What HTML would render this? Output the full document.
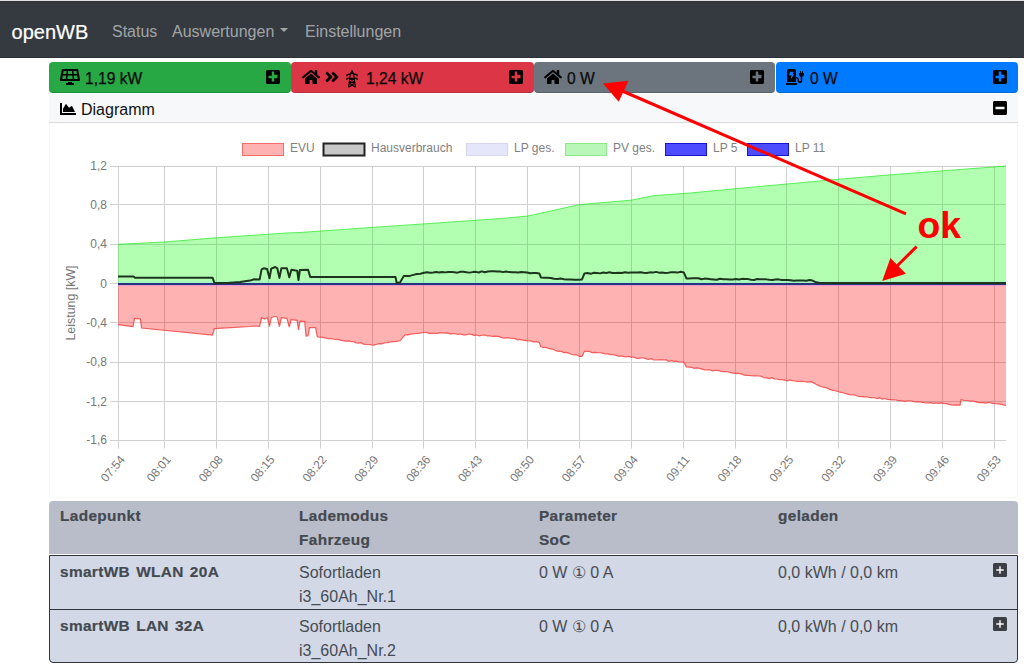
<!DOCTYPE html>
<html><head><meta charset="utf-8"><style>
*{box-sizing:border-box}
html,body{margin:0;padding:0;width:1024px;height:670px;overflow:hidden;background:#fff;font-family:"Liberation Sans",sans-serif;position:relative}
.abs{position:absolute}
.nav{left:0;top:0;width:1024px;height:58px;background:#343a40;border-top:1px solid #dde0e4;border-bottom:1px solid #2c3136;box-shadow:inset 0 1px 0 #2e3237}
.nav .t{position:absolute;white-space:nowrap}
.card{position:absolute;top:62px;height:31px;border-radius:4px;border-bottom:1px solid rgba(0,0,0,.15);color:#0a0a0a;font-size:15.6px}
.card .lbl{position:absolute;top:6.5px;white-space:nowrap;line-height:19px;-webkit-text-stroke:.25px #0a0a0a}
.card .pl{position:absolute;top:7px;right:11px;color:#000;line-height:0}
.ico{position:absolute;line-height:0;color:#000}
</style></head><body>
<div class="abs nav">
  <div class="t" style="left:11.6px;top:18.8px;font-size:20px;color:#fff;line-height:24px;-webkit-text-stroke:.2px #fff">openWB</div>
  <div class="t" style="left:112px;top:21px;font-size:16px;color:rgba(255,255,255,.55);line-height:19px">Status</div>
  <div class="t" style="left:172px;top:21px;font-size:16px;color:rgba(255,255,255,.55);line-height:19px">Auswertungen</div>
  <div class="t" style="left:280px;top:27px;width:0;height:0;border-left:4px solid transparent;border-right:4px solid transparent;border-top:4.5px solid rgba(255,255,255,.55)"></div>
  <div class="t" style="left:305px;top:21px;font-size:16px;color:rgba(255,255,255,.55);line-height:19px">Einstellungen</div>
</div>
<div class="card" style="left:49px;width:241.5px;background:#28a745">
  <div class="ico" style="left:10.8px;top:7.4px"><svg viewBox="0 0 640 512" width="20" height="16"><path fill="currentColor" d="M431.98 448.01l-47.97.05V416h-128v32.21l-47.98.05c-8.82.01-15.97 7.16-15.98 15.99l-.05 31.73c-.01 8.85 7.17 16.03 16.02 16.02l223.96-.26c8.82-.01 15.97-7.16 15.98-15.98l.04-31.73c.01-8.85-7.17-16.03-16.02-16.02zM585.2 26.74C582.58 11.31 568.99 0 553.06 0H86.93C71 0 57.41 11.31 54.79 26.74-3.32 369.16.04 348.08.03 352c-.03 17.32 14.29 32 32.6 32h574.74c18.23 0 32.51-14.56 32.59-31.79.02-4.08 3.35 16.46-54.76-325.47zM259.83 64h120.33l9.77 96H250.06l9.77-96zm-75.17 256H71.09L90.1 208h105.97l-11.41 112zm16.29-160H98.24l16.29-96h96.19l-9.77 96zm32.82 160l11.4-112h149.65l11.4 112H233.77zm195.5-256h96.19l16.29 96H439.04l-9.77-96zm26.06 256l-11.4-112H549.9l19.01 112H455.33z"/></svg></div>
  <div class="lbl" style="left:36px">1,19 kW</div>
  <div class="pl"><svg viewBox="0 0 448 512" width="14" height="16"><path fill="currentColor" d="M400 32H48C21.5 32 0 53.5 0 80v352c0 26.5 21.5 48 48 48h352c26.5 0 48-21.5 48-48V80c0-26.5-21.5-48-48-48zm-32 252c0 6.6-5.4 12-12 12h-92v92c0 6.6-5.4 12-12 12h-56c-6.6 0-12-5.4-12-12v-92H92c-6.6 0-12-5.4-12-12v-56c0-6.6 5.4-12 12-12h92V92c0-6.6 5.4-12 12-12h56c6.6 0 12 5.4 12 12v92h92c6.6 0 12 5.4 12 12v56z"/></svg></div>
</div>
<div class="card" style="left:291px;width:242.5px;background:#dc3545">
  <div class="ico" style="left:11px;top:7px"><svg viewBox="0 0 576 512" width="18" height="16"><path fill="currentColor" d="M280.37 148.26L96 300.11V464a16 16 0 0 0 16 16l112.06-.29a16 16 0 0 0 15.92-16V368a16 16 0 0 1 16-16h64a16 16 0 0 1 16 16v95.64a16 16 0 0 0 16 16.05L464 480a16 16 0 0 0 16-16V300L295.67 148.26a12.19 12.19 0 0 0-15.3 0zM571.6 251.47L488 182.56V44.05a12 12 0 0 0-12-12h-56a12 12 0 0 0-12 12v72.61L318.47 43a48 48 0 0 0-61 0L4.34 251.47a12 12 0 0 0-1.6 16.9l25.5 31A12 12 0 0 0 45.15 301l235.22-193.74a12.19 12.19 0 0 1 15.3 0L530.9 301a12 12 0 0 0 16.9-1.6l25.5-31a12 12 0 0 0-1.7-16.93z"/></svg></div>
  <div class="ico" style="left:325px;top:7px;left:34px"><svg viewBox="0 0 448 512" width="14" height="16"><path fill="currentColor" stroke="currentColor" stroke-width="10" stroke-linejoin="round" d="M224.3 273l-136 136c-9.4 9.4-24.6 9.4-33.9 0l-22.6-22.6c-9.4-9.4-9.4-24.6 0-33.9l96.4-96.4-96.4-96.4c-9.4-9.4-9.4-24.6 0-33.9L54.3 103c9.4-9.4 24.6-9.4 33.9 0l136 136c9.5 9.4 9.5 24.6.1 34zm192-34l-136-136c-9.4-9.4-24.6-9.4-33.9 0l-22.6 22.6c-9.4 9.4-9.4 24.6 0 33.9l96.4 96.4-96.4 96.4c-9.4 9.4-9.4 24.6 0 33.9l22.6 22.6c9.4 9.4 24.6 9.4 33.9 0l136-136c9.4-9.2 9.4-24.4 0-33.8z"/></svg></div>
  <div class="ico" style="left:54.8px;top:8px"><svg viewBox="0 0 12 18" width="12" height="18"><g fill="none" stroke="currentColor" stroke-width="1.1" stroke-linejoin="round"><path d="M6 0.6 L4.3 4 L2.6 17.4 M6 0.6 L7.7 4 L9.4 17.4 M0.9 6.3 L0.9 4.9 L6 3.4 L11.1 4.9 L11.1 6.3 M0.9 10 L0.9 8.2 L11.1 8.2 L11.1 10 M4 8.2 L8.4 12.5 M8 8.2 L3.6 12.5 M3.6 12.5 L8.4 12.5 M3.3 13 L8.9 17 M8.7 13 L3.1 17"/></g></svg></div>
  <div class="lbl" style="left:75px">1,24 kW</div>
  <div class="pl"><svg viewBox="0 0 448 512" width="14" height="16"><path fill="currentColor" d="M400 32H48C21.5 32 0 53.5 0 80v352c0 26.5 21.5 48 48 48h352c26.5 0 48-21.5 48-48V80c0-26.5-21.5-48-48-48zm-32 252c0 6.6-5.4 12-12 12h-92v92c0 6.6-5.4 12-12 12h-56c-6.6 0-12-5.4-12-12v-92H92c-6.6 0-12-5.4-12-12v-56c0-6.6 5.4-12 12-12h92V92c0-6.6 5.4-12 12-12h56c6.6 0 12 5.4 12 12v92h92c6.6 0 12 5.4 12 12v56z"/></svg></div>
</div>
<div class="card" style="left:534px;width:241px;background:#6c757d">
  <div class="ico" style="left:10px;top:7px"><svg viewBox="0 0 576 512" width="18" height="16"><path fill="currentColor" d="M280.37 148.26L96 300.11V464a16 16 0 0 0 16 16l112.06-.29a16 16 0 0 0 15.92-16V368a16 16 0 0 1 16-16h64a16 16 0 0 1 16 16v95.64a16 16 0 0 0 16 16.05L464 480a16 16 0 0 0 16-16V300L295.67 148.26a12.19 12.19 0 0 0-15.3 0zM571.6 251.47L488 182.56V44.05a12 12 0 0 0-12-12h-56a12 12 0 0 0-12 12v72.61L318.47 43a48 48 0 0 0-61 0L4.34 251.47a12 12 0 0 0-1.6 16.9l25.5 31A12 12 0 0 0 45.15 301l235.22-193.74a12.19 12.19 0 0 1 15.3 0L530.9 301a12 12 0 0 0 16.9-1.6l25.5-31a12 12 0 0 0-1.7-16.93z"/></svg></div>
  <div class="lbl" style="left:33px">0 W</div>
  <div class="pl"><svg viewBox="0 0 448 512" width="14" height="16"><path fill="currentColor" d="M400 32H48C21.5 32 0 53.5 0 80v352c0 26.5 21.5 48 48 48h352c26.5 0 48-21.5 48-48V80c0-26.5-21.5-48-48-48zm-32 252c0 6.6-5.4 12-12 12h-92v92c0 6.6-5.4 12-12 12h-56c-6.6 0-12-5.4-12-12v-92H92c-6.6 0-12-5.4-12-12v-56c0-6.6 5.4-12 12-12h92V92c0-6.6 5.4-12 12-12h56c6.6 0 12 5.4 12 12v92h92c6.6 0 12 5.4 12 12v56z"/></svg></div>
</div>
<div class="card" style="left:776px;width:242px;background:#007bff">
  <div class="ico" style="left:10px;top:7px"><svg viewBox="0 0 576 512" width="18" height="16"><path fill="currentColor" d="M336 448H16c-8.84 0-16 7.16-16 16v32c0 8.84 7.16 16 16 16h320c8.84 0 16-7.16 16-16v-32c0-8.84-7.16-16-16-16zm208-320V80c0-8.84-7.16-16-16-16s-16 7.160-16 16v48h-32V80c0-8.84-7.16-16-16-16s-16 7.16-16 16v48h-16c-8.84 0-16 7.16-16 16v32c0 35.76 23.620 65.69 56 75.930v118.49c0 13.95-9.5 26.92-23.26 29.19C431.22 402.5 416 388.99 416 372v-28c0-48.6-39.4-88-88-88h-8V64c0-35.35-28.65-64-64-64H96C60.65 0 32 28.65 32 64v352h288V304h8c22.09 0 40 17.91 40 40v24.61c0 39.67 28.92 75.16 68.41 79.01C481.71 452.05 520 416.41 520 372V251.93c32.38-10.24 56-40.17 56-75.930v-32c0-8.84-7.16-16-16-16h-16zm-283.91 47.68l-75.09 112c-3.05 4.78-8.25 7.32-13.5 7.32-10.98 0-18.78-10.61-15.52-21.06L177.8 208H112c-8.41 0-14.6-8.06-12.9-16.13l22.63-96C123 90.2 128.27 86 134.3 86H224c10.71 0 18.43 10.23 15.34 20.57L216 176h32c12.42 0 20.08 13.42 13.66 23.74z"/></svg></div>
  <div class="lbl" style="left:34px">0 W</div>
  <div class="pl"><svg viewBox="0 0 448 512" width="14" height="16"><path fill="currentColor" d="M400 32H48C21.5 32 0 53.5 0 80v352c0 26.5 21.5 48 48 48h352c26.5 0 48-21.5 48-48V80c0-26.5-21.5-48-48-48zm-32 252c0 6.6-5.4 12-12 12h-92v92c0 6.6-5.4 12-12 12h-56c-6.6 0-12-5.4-12-12v-92H92c-6.6 0-12-5.4-12-12v-56c0-6.6 5.4-12 12-12h92V92c0-6.6 5.4-12 12-12h56c6.6 0 12 5.4 12 12v92h92c6.6 0 12 5.4 12 12v56z"/></svg></div>
</div>
<div class="abs" style="left:49px;top:94px;width:969px;height:404px;border:1px solid rgba(0,0,0,.035);border-radius:4px;background:#fff"></div>
<div class="abs" style="left:49px;top:94px;width:969px;height:29px;background:#f7f8fa;border-bottom:1px solid #dcdcdc;border-radius:4px 4px 0 0"></div>
<div class="ico" style="left:60px;top:101px"><svg viewBox="0 0 512 512" width="16" height="16"><path fill="currentColor" d="M500 384c6.6 0 12 5.4 12 12v40c0 6.6-5.4 12-12 12H12c-6.6 0-12-5.4-12-12V76c0-6.6 5.4-12 12-12h40c6.6 0 12 5.4 12 12v308h436zM372.7 159.5L288 216l-85.3-113.7c-5.1-6.8-15.5-6.3-19.9 1L96 248v104h384l-89.9-187.8c-3.2-6.5-11.4-8.7-17.4-4.7z"/></svg></div>
<div class="abs" style="left:81px;top:100px;font-size:16px;color:#111;line-height:19px">Diagramm</div>
<div class="ico" style="left:993px;top:100px"><svg viewBox="0 0 448 512" width="14" height="16"><path fill="currentColor" d="M400 32H48C21.5 32 0 53.5 0 80v352c0 26.5 21.5 48 48 48h352c26.5 0 48-21.5 48-48V80c0-26.5-21.5-48-48-48zM92 296c-6.6 0-12-5.4-12-12v-56c0-6.6 5.4-12 12-12h264c6.6 0 12 5.4 12 12v56c0 6.6-5.4 12-12 12H92z"/></svg></div>
<svg width="1024" height="670" style="position:absolute;left:0;top:0">
<line x1="110" y1="166.5" x2="1006" y2="166.5" stroke="#d0d0d0" stroke-width="1"/>
<line x1="110" y1="204.5" x2="1006" y2="204.5" stroke="#d0d0d0" stroke-width="1"/>
<line x1="110" y1="244.5" x2="1006" y2="244.5" stroke="#d0d0d0" stroke-width="1"/>
<line x1="110" y1="283.5" x2="1006" y2="283.5" stroke="#d0d0d0" stroke-width="1"/>
<line x1="110" y1="322.5" x2="1006" y2="322.5" stroke="#d0d0d0" stroke-width="1"/>
<line x1="110" y1="362.5" x2="1006" y2="362.5" stroke="#d0d0d0" stroke-width="1"/>
<line x1="110" y1="401.5" x2="1006" y2="401.5" stroke="#d0d0d0" stroke-width="1"/>
<line x1="110" y1="440.5" x2="1006" y2="440.5" stroke="#d0d0d0" stroke-width="1"/>
<line x1="118.5" y1="166" x2="118.5" y2="448.5" stroke="#d0d0d0" stroke-width="1"/>
<line x1="164.5" y1="166" x2="164.5" y2="448.5" stroke="#d0d0d0" stroke-width="1"/>
<line x1="216.5" y1="166" x2="216.5" y2="448.5" stroke="#d0d0d0" stroke-width="1"/>
<line x1="268.5" y1="166" x2="268.5" y2="448.5" stroke="#d0d0d0" stroke-width="1"/>
<line x1="320.5" y1="166" x2="320.5" y2="448.5" stroke="#d0d0d0" stroke-width="1"/>
<line x1="372.5" y1="166" x2="372.5" y2="448.5" stroke="#d0d0d0" stroke-width="1"/>
<line x1="423.5" y1="166" x2="423.5" y2="448.5" stroke="#d0d0d0" stroke-width="1"/>
<line x1="475.5" y1="166" x2="475.5" y2="448.5" stroke="#d0d0d0" stroke-width="1"/>
<line x1="527.5" y1="166" x2="527.5" y2="448.5" stroke="#d0d0d0" stroke-width="1"/>
<line x1="579.5" y1="166" x2="579.5" y2="448.5" stroke="#d0d0d0" stroke-width="1"/>
<line x1="631.5" y1="166" x2="631.5" y2="448.5" stroke="#d0d0d0" stroke-width="1"/>
<line x1="683.5" y1="166" x2="683.5" y2="448.5" stroke="#d0d0d0" stroke-width="1"/>
<line x1="735.5" y1="166" x2="735.5" y2="448.5" stroke="#d0d0d0" stroke-width="1"/>
<line x1="786.5" y1="166" x2="786.5" y2="448.5" stroke="#d0d0d0" stroke-width="1"/>
<line x1="838.5" y1="166" x2="838.5" y2="448.5" stroke="#d0d0d0" stroke-width="1"/>
<line x1="890.5" y1="166" x2="890.5" y2="448.5" stroke="#d0d0d0" stroke-width="1"/>
<line x1="942.5" y1="166" x2="942.5" y2="448.5" stroke="#d0d0d0" stroke-width="1"/>
<line x1="994.5" y1="166" x2="994.5" y2="448.5" stroke="#d0d0d0" stroke-width="1"/>
<text x="107" y="170.3" text-anchor="end" font-family="Liberation Sans" font-size="12" fill="#777">1,2</text>
<text x="107" y="208.8" text-anchor="end" font-family="Liberation Sans" font-size="12" fill="#777">0,8</text>
<text x="107" y="248.3" text-anchor="end" font-family="Liberation Sans" font-size="12" fill="#777">0,4</text>
<text x="107" y="287.8" text-anchor="end" font-family="Liberation Sans" font-size="12" fill="#777">0</text>
<text x="107" y="326.8" text-anchor="end" font-family="Liberation Sans" font-size="12" fill="#777">-0,4</text>
<text x="107" y="366.3" text-anchor="end" font-family="Liberation Sans" font-size="12" fill="#777">-0,8</text>
<text x="107" y="405.8" text-anchor="end" font-family="Liberation Sans" font-size="12" fill="#777">-1,2</text>
<text x="107" y="444.3" text-anchor="end" font-family="Liberation Sans" font-size="12" fill="#777">-1,6</text>
<text transform="translate(75.3,303) rotate(-90)" text-anchor="middle" font-family="Liberation Sans" font-size="12.4" fill="#777">Leistung [kW]</text>
<text transform="translate(123.2,457.8) rotate(-50)" text-anchor="end" dominant-baseline="middle" font-family="Liberation Sans" font-size="12" fill="#777">07:54</text>
<text transform="translate(169.2,457.8) rotate(-50)" text-anchor="end" dominant-baseline="middle" font-family="Liberation Sans" font-size="12" fill="#777">08:01</text>
<text transform="translate(221.075,457.8) rotate(-50)" text-anchor="end" dominant-baseline="middle" font-family="Liberation Sans" font-size="12" fill="#777">08:08</text>
<text transform="translate(272.95,457.8) rotate(-50)" text-anchor="end" dominant-baseline="middle" font-family="Liberation Sans" font-size="12" fill="#777">08:15</text>
<text transform="translate(324.825,457.8) rotate(-50)" text-anchor="end" dominant-baseline="middle" font-family="Liberation Sans" font-size="12" fill="#777">08:22</text>
<text transform="translate(376.7,457.8) rotate(-50)" text-anchor="end" dominant-baseline="middle" font-family="Liberation Sans" font-size="12" fill="#777">08:29</text>
<text transform="translate(428.575,457.8) rotate(-50)" text-anchor="end" dominant-baseline="middle" font-family="Liberation Sans" font-size="12" fill="#777">08:36</text>
<text transform="translate(480.45,457.8) rotate(-50)" text-anchor="end" dominant-baseline="middle" font-family="Liberation Sans" font-size="12" fill="#777">08:43</text>
<text transform="translate(532.325,457.8) rotate(-50)" text-anchor="end" dominant-baseline="middle" font-family="Liberation Sans" font-size="12" fill="#777">08:50</text>
<text transform="translate(584.2,457.8) rotate(-50)" text-anchor="end" dominant-baseline="middle" font-family="Liberation Sans" font-size="12" fill="#777">08:57</text>
<text transform="translate(636.075,457.8) rotate(-50)" text-anchor="end" dominant-baseline="middle" font-family="Liberation Sans" font-size="12" fill="#777">09:04</text>
<text transform="translate(687.95,457.8) rotate(-50)" text-anchor="end" dominant-baseline="middle" font-family="Liberation Sans" font-size="12" fill="#777">09:11</text>
<text transform="translate(739.825,457.8) rotate(-50)" text-anchor="end" dominant-baseline="middle" font-family="Liberation Sans" font-size="12" fill="#777">09:18</text>
<text transform="translate(791.7,457.8) rotate(-50)" text-anchor="end" dominant-baseline="middle" font-family="Liberation Sans" font-size="12" fill="#777">09:25</text>
<text transform="translate(843.575,457.8) rotate(-50)" text-anchor="end" dominant-baseline="middle" font-family="Liberation Sans" font-size="12" fill="#777">09:32</text>
<text transform="translate(895.45,457.8) rotate(-50)" text-anchor="end" dominant-baseline="middle" font-family="Liberation Sans" font-size="12" fill="#777">09:39</text>
<text transform="translate(947.325,457.8) rotate(-50)" text-anchor="end" dominant-baseline="middle" font-family="Liberation Sans" font-size="12" fill="#777">09:46</text>
<text transform="translate(999.2,457.8) rotate(-50)" text-anchor="end" dominant-baseline="middle" font-family="Liberation Sans" font-size="12" fill="#777">09:53</text>
<polygon points="118,244.3 164,242 216,237.8 288,232.9 300,232.5 372,227.4 424,223.9 500,218.6 528,216 555,210 580,204.5 631,200.2 654,195.6 690,193 755,186.9 837,179.4 888,175 1006,166 1006,283.4 118,283.4" fill="rgba(0,255,0,0.3)"/>
<polygon points="118.0,324.70 133.0,326.70 134.5,318.30 140.3,318.90 141.6,328.00 212.5,335.00 214.5,328.60 250.0,326.50 254.1,326.00 259.6,326.30 261.6,317.60 265.0,319.00 267.4,317.60 269.5,326.50 271.2,317.60 275.3,316.30 277.3,317.30 279.4,326.50 281.4,317.60 286.9,318.30 289.3,327.20 291.0,319.70 297.2,320.40 298.5,330.00 299.9,321.10 304.7,321.40 306.0,336.10 308.1,335.80 309.5,327.60 315.6,327.60 317.3,336.80 320.0,337.10 322.6,337.42 325.1,337.93 327.7,338.75 330.3,338.58 332.9,339.01 335.4,339.49 338.0,339.39 340.6,340.16 343.1,340.68 345.7,341.26 348.3,340.80 350.9,341.44 353.4,341.56 356.0,342.80 358.6,343.05 361.1,342.65 363.7,344.15 366.3,344.51 368.9,344.52 371.4,344.86 374.0,345.10 376.6,344.26 379.2,343.66 381.8,343.84 384.4,342.85 387.0,342.58 389.6,342.21 392.2,341.53 394.8,341.62 397.4,341.16 400.0,340.80 405.0,334.80 407.7,334.88 410.4,334.17 413.1,333.98 415.9,333.49 418.6,333.35 421.3,332.78 424.0,332.50 426.6,332.34 429.2,333.32 431.8,333.42 434.4,333.34 437.0,333.29 439.7,332.93 442.3,332.94 444.9,333.12 447.5,332.97 450.1,333.91 452.7,333.70 455.4,333.73 458.0,334.42 460.7,334.01 463.4,334.85 466.0,334.87 468.7,334.00 471.4,334.40 474.0,335.39 476.7,335.01 479.3,335.78 482.0,335.23 484.7,334.99 487.3,335.81 490.0,335.80 492.5,336.47 495.0,336.19 497.6,336.30 500.1,336.93 502.6,338.02 505.1,338.11 507.6,337.67 510.2,338.16 512.7,338.32 515.2,338.61 517.7,339.82 520.2,339.41 522.8,340.20 525.3,340.40 527.8,340.80 530.7,340.83 533.5,341.88 536.4,341.56 539.3,342.40 540.9,346.70 543.5,347.48 546.0,347.46 548.6,348.44 551.2,348.81 553.7,349.49 556.3,350.94 558.9,351.35 561.5,351.36 564.0,352.67 566.6,352.48 569.2,353.31 571.7,354.48 574.3,354.83 576.9,354.80 579.4,356.47 582.0,356.50 584.5,351.30 587.1,351.28 589.7,351.67 592.3,352.61 594.9,352.41 597.5,352.69 600.1,352.75 602.7,353.10 605.3,354.02 607.9,353.94 610.4,354.70 613.0,354.75 615.6,355.18 618.2,356.11 620.8,355.87 623.4,356.31 626.0,356.98 628.6,356.49 631.2,357.20 633.7,357.02 636.2,358.16 638.7,358.28 641.2,357.83 643.7,357.99 646.2,358.89 648.7,359.36 651.2,358.70 653.7,359.84 656.2,359.99 658.8,359.89 661.3,359.91 663.8,359.76 666.3,359.91 668.8,361.26 671.3,360.62 673.8,361.41 676.3,361.11 678.8,362.02 681.3,361.98 683.8,362.10 686.4,367.00 689.0,367.09 691.6,367.28 694.2,368.27 696.8,367.83 699.5,368.36 702.1,369.09 704.7,369.78 707.3,369.83 709.9,369.77 712.5,370.87 715.1,370.35 717.7,370.46 720.3,371.10 722.9,371.65 725.6,371.53 728.2,372.00 730.8,372.57 733.4,373.15 736.0,373.40 738.6,373.31 741.1,373.94 743.7,374.93 746.2,375.39 748.8,375.35 751.3,375.75 753.9,375.97 756.4,375.79 759.0,376.02 761.5,376.35 764.1,377.77 766.6,377.87 769.2,378.54 771.7,377.76 774.3,378.85 776.8,379.02 779.4,379.67 781.9,379.53 784.5,380.10 787.1,380.86 789.7,379.91 792.2,380.64 794.8,381.02 797.4,381.38 800.0,381.34 802.6,381.46 805.1,381.73 807.7,382.04 810.3,381.70 813.2,382.66 816.0,384.20 818.9,385.60 821.7,386.71 824.6,387.40 827.3,388.12 829.9,389.39 832.6,390.30 835.2,390.77 837.9,391.50 840.6,392.35 843.3,392.76 845.9,393.70 848.6,394.43 851.3,395.00 853.9,394.81 856.5,395.79 859.1,396.53 861.7,396.71 864.3,396.84 866.9,396.75 869.5,397.48 872.0,397.60 874.6,397.75 877.2,398.54 879.8,397.95 882.4,399.06 885.0,398.51 887.6,399.51 890.2,399.70 892.7,399.88 895.2,399.79 897.8,400.56 900.3,400.53 902.8,400.88 905.3,401.45 907.9,400.86 910.4,400.78 912.9,401.33 915.4,401.99 918.0,401.63 920.5,401.80 923.0,402.40 925.6,403.01 928.1,402.84 930.7,402.71 933.3,403.37 935.9,402.82 938.5,403.35 941.0,402.91 943.6,403.40 946.3,403.63 949.1,404.40 951.8,404.85 954.5,405.12 957.3,404.84 960.0,405.30 961.0,399.70 964.1,400.30 967.1,400.48 970.2,401.20 972.7,401.01 975.2,401.68 977.7,402.34 980.2,402.60 982.8,402.68 985.3,403.21 987.8,402.64 990.3,402.76 992.8,403.40 995.4,403.72 998.1,403.89 1000.7,404.20 1003.4,404.82 1006.0,405.30 1006,283.4 118,283.4" fill="rgba(255,0,0,0.3)"/>
<polyline points="118,244.3 164,242 216,237.8 288,232.9 300,232.5 372,227.4 424,223.9 500,218.6 528,216 555,210 580,204.5 631,200.2 654,195.6 690,193 755,186.9 837,179.4 888,175 1006,166" fill="none" stroke="rgba(0,230,0,0.6)" stroke-width="1"/>
<polyline points="118.0,324.70 133.0,326.70 134.5,318.30 140.3,318.90 141.6,328.00 212.5,335.00 214.5,328.60 250.0,326.50 254.1,326.00 259.6,326.30 261.6,317.60 265.0,319.00 267.4,317.60 269.5,326.50 271.2,317.60 275.3,316.30 277.3,317.30 279.4,326.50 281.4,317.60 286.9,318.30 289.3,327.20 291.0,319.70 297.2,320.40 298.5,330.00 299.9,321.10 304.7,321.40 306.0,336.10 308.1,335.80 309.5,327.60 315.6,327.60 317.3,336.80 320.0,337.10 322.6,337.42 325.1,337.93 327.7,338.75 330.3,338.58 332.9,339.01 335.4,339.49 338.0,339.39 340.6,340.16 343.1,340.68 345.7,341.26 348.3,340.80 350.9,341.44 353.4,341.56 356.0,342.80 358.6,343.05 361.1,342.65 363.7,344.15 366.3,344.51 368.9,344.52 371.4,344.86 374.0,345.10 376.6,344.26 379.2,343.66 381.8,343.84 384.4,342.85 387.0,342.58 389.6,342.21 392.2,341.53 394.8,341.62 397.4,341.16 400.0,340.80 405.0,334.80 407.7,334.88 410.4,334.17 413.1,333.98 415.9,333.49 418.6,333.35 421.3,332.78 424.0,332.50 426.6,332.34 429.2,333.32 431.8,333.42 434.4,333.34 437.0,333.29 439.7,332.93 442.3,332.94 444.9,333.12 447.5,332.97 450.1,333.91 452.7,333.70 455.4,333.73 458.0,334.42 460.7,334.01 463.4,334.85 466.0,334.87 468.7,334.00 471.4,334.40 474.0,335.39 476.7,335.01 479.3,335.78 482.0,335.23 484.7,334.99 487.3,335.81 490.0,335.80 492.5,336.47 495.0,336.19 497.6,336.30 500.1,336.93 502.6,338.02 505.1,338.11 507.6,337.67 510.2,338.16 512.7,338.32 515.2,338.61 517.7,339.82 520.2,339.41 522.8,340.20 525.3,340.40 527.8,340.80 530.7,340.83 533.5,341.88 536.4,341.56 539.3,342.40 540.9,346.70 543.5,347.48 546.0,347.46 548.6,348.44 551.2,348.81 553.7,349.49 556.3,350.94 558.9,351.35 561.5,351.36 564.0,352.67 566.6,352.48 569.2,353.31 571.7,354.48 574.3,354.83 576.9,354.80 579.4,356.47 582.0,356.50 584.5,351.30 587.1,351.28 589.7,351.67 592.3,352.61 594.9,352.41 597.5,352.69 600.1,352.75 602.7,353.10 605.3,354.02 607.9,353.94 610.4,354.70 613.0,354.75 615.6,355.18 618.2,356.11 620.8,355.87 623.4,356.31 626.0,356.98 628.6,356.49 631.2,357.20 633.7,357.02 636.2,358.16 638.7,358.28 641.2,357.83 643.7,357.99 646.2,358.89 648.7,359.36 651.2,358.70 653.7,359.84 656.2,359.99 658.8,359.89 661.3,359.91 663.8,359.76 666.3,359.91 668.8,361.26 671.3,360.62 673.8,361.41 676.3,361.11 678.8,362.02 681.3,361.98 683.8,362.10 686.4,367.00 689.0,367.09 691.6,367.28 694.2,368.27 696.8,367.83 699.5,368.36 702.1,369.09 704.7,369.78 707.3,369.83 709.9,369.77 712.5,370.87 715.1,370.35 717.7,370.46 720.3,371.10 722.9,371.65 725.6,371.53 728.2,372.00 730.8,372.57 733.4,373.15 736.0,373.40 738.6,373.31 741.1,373.94 743.7,374.93 746.2,375.39 748.8,375.35 751.3,375.75 753.9,375.97 756.4,375.79 759.0,376.02 761.5,376.35 764.1,377.77 766.6,377.87 769.2,378.54 771.7,377.76 774.3,378.85 776.8,379.02 779.4,379.67 781.9,379.53 784.5,380.10 787.1,380.86 789.7,379.91 792.2,380.64 794.8,381.02 797.4,381.38 800.0,381.34 802.6,381.46 805.1,381.73 807.7,382.04 810.3,381.70 813.2,382.66 816.0,384.20 818.9,385.60 821.7,386.71 824.6,387.40 827.3,388.12 829.9,389.39 832.6,390.30 835.2,390.77 837.9,391.50 840.6,392.35 843.3,392.76 845.9,393.70 848.6,394.43 851.3,395.00 853.9,394.81 856.5,395.79 859.1,396.53 861.7,396.71 864.3,396.84 866.9,396.75 869.5,397.48 872.0,397.60 874.6,397.75 877.2,398.54 879.8,397.95 882.4,399.06 885.0,398.51 887.6,399.51 890.2,399.70 892.7,399.88 895.2,399.79 897.8,400.56 900.3,400.53 902.8,400.88 905.3,401.45 907.9,400.86 910.4,400.78 912.9,401.33 915.4,401.99 918.0,401.63 920.5,401.80 923.0,402.40 925.6,403.01 928.1,402.84 930.7,402.71 933.3,403.37 935.9,402.82 938.5,403.35 941.0,402.91 943.6,403.40 946.3,403.63 949.1,404.40 951.8,404.85 954.5,405.12 957.3,404.84 960.0,405.30 961.0,399.70 964.1,400.30 967.1,400.48 970.2,401.20 972.7,401.01 975.2,401.68 977.7,402.34 980.2,402.60 982.8,402.68 985.3,403.21 987.8,402.64 990.3,402.76 992.8,403.40 995.4,403.72 998.1,403.89 1000.7,404.20 1003.4,404.82 1006.0,405.30" fill="none" stroke="rgba(240,60,60,0.8)" stroke-width="1.2"/>
<line x1="118" y1="282.09999999999997" x2="1006" y2="282.09999999999997" stroke="rgba(120,220,255,0.45)" stroke-width="1"/>
<line x1="118" y1="285.59999999999997" x2="1006" y2="285.59999999999997" stroke="rgba(220,120,255,0.45)" stroke-width="1"/>
<line x1="118" y1="283.9" x2="1006" y2="283.9" stroke="#28357a" stroke-width="2"/>
<polyline points="118.0,276.50 133.5,276.50 135.0,277.70 212.5,277.70 214.5,283.10 227.0,283.10 240.0,282.00 250.0,280.60 254.1,279.30 259.6,279.60 261.6,269.40 263.7,268.30 267.1,269.00 269.5,278.20 271.2,268.70 275.3,267.00 277.3,268.30 279.4,277.90 281.4,268.30 286.9,268.30 289.3,277.20 291.4,269.70 297.2,270.70 298.5,280.00 299.9,270.00 308.1,269.70 310.2,276.90 395.5,276.90 396.7,283.00 400.0,282.50 403.8,275.90 409.8,275.90 413.4,274.91 416.9,273.93 420.4,273.76 424.0,272.80 427.0,272.24 430.1,272.75 433.1,272.49 436.2,272.08 439.2,272.57 442.2,271.96 445.3,272.38 448.3,271.90 451.4,271.88 454.4,272.23 457.4,272.66 460.5,271.77 463.5,271.84 466.6,272.28 469.6,272.62 472.6,272.12 475.7,271.86 478.7,272.51 481.8,271.34 484.8,272.27 487.8,271.54 490.9,271.32 493.9,271.24 497.0,271.42 500.0,271.60 503.0,272.12 506.0,271.49 509.1,272.11 512.1,272.32 515.1,272.14 518.1,272.49 521.2,272.04 524.2,272.18 527.2,272.49 530.2,273.20 533.3,273.04 536.3,273.04 539.3,273.40 540.9,277.40 544.2,277.75 547.5,277.84 550.8,277.91 554.0,278.75 557.3,278.89 560.6,278.59 563.9,279.24 567.2,279.40 570.9,279.43 574.6,279.85 578.3,279.68 582.0,279.40 584.5,273.40 587.6,273.08 590.7,273.84 593.8,272.74 597.0,273.04 600.1,273.38 603.2,272.58 606.3,272.92 609.4,272.31 612.5,273.00 615.6,273.05 618.7,272.75 621.9,273.05 625.0,272.31 628.1,272.70 631.2,272.40 634.3,272.51 637.4,272.50 640.5,272.35 643.6,272.81 646.7,272.93 649.8,272.37 652.9,272.60 656.0,271.87 659.0,272.64 662.1,272.58 665.2,272.99 668.3,272.79 671.4,272.14 674.5,272.26 677.6,272.60 680.7,271.83 683.8,272.40 686.4,278.40 689.4,278.47 692.4,278.22 695.5,278.27 698.5,278.32 701.5,279.28 704.5,278.62 707.6,278.87 710.6,279.16 713.6,279.40 716.8,279.79 720.0,278.78 723.2,279.17 726.4,279.23 729.6,279.57 732.8,279.44 736.0,279.00 739.0,279.51 742.1,278.87 745.1,279.10 748.1,279.11 751.2,279.80 754.2,279.96 757.2,279.06 760.2,279.16 763.3,279.30 766.3,279.37 769.3,279.74 772.4,279.93 775.4,279.61 778.4,279.37 781.5,279.93 784.5,280.10 787.6,280.00 790.7,280.29 793.8,280.81 796.9,280.55 800.1,280.40 803.2,280.57 806.3,280.70 809.4,280.01 812.5,280.60 816.2,282.33 820.0,283.10 1006.0,283.10" fill="none" stroke="#1c351c" stroke-width="2" stroke-linejoin="round"/>
<rect x="242.5" y="143.5" width="41" height="12" fill="rgba(255,0,0,0.3)" stroke="rgba(240,60,60,0.7)" stroke-width="1"/>
<text x="290" y="152.3" font-family="Liberation Sans" font-size="12" fill="#808080">EVU</text>
<rect x="323.5" y="143.5" width="41" height="12" fill="#c8c8c8" stroke="#222" stroke-width="2"/>
<text x="371" y="152.3" font-family="Liberation Sans" font-size="12" fill="#808080">Hausverbrauch</text>
<rect x="466.5" y="143.5" width="41" height="12" fill="#e6e6fb" stroke="#d6d6f0" stroke-width="1"/>
<text x="514" y="152.3" font-family="Liberation Sans" font-size="12" fill="#808080">LP ges.</text>
<rect x="565.5" y="143.5" width="41" height="12" fill="#b8f7b8" stroke="#8ee88e" stroke-width="1"/>
<text x="613" y="152.3" font-family="Liberation Sans" font-size="12" fill="#808080">PV ges.</text>
<rect x="665.5" y="143.5" width="41" height="12" fill="#4d4dff" stroke="#1414d2" stroke-width="1"/>
<text x="713" y="152.3" font-family="Liberation Sans" font-size="12" fill="#808080">LP 5</text>
<rect x="747.5" y="143.5" width="41" height="12" fill="#4d4dff" stroke="#1414d2" stroke-width="1"/>
<text x="795" y="152.3" font-family="Liberation Sans" font-size="12" fill="#808080">LP 11</text>
<line x1="906" y1="213.8" x2="620" y2="90" stroke="#f00" stroke-width="3"/>
<polygon points="603,83.4 628.5,80.8 618.7,101.8" fill="#ff0000"/>
<line x1="916.6" y1="246.6" x2="893" y2="270" stroke="#f00" stroke-width="3"/>
<polygon points="882.2,281.1 890.4,258.1 906,273.7" fill="#ff0000"/>
<text x="917.5" y="238" font-family="Liberation Sans" font-weight="bold" font-size="36" fill="#f00" textLength="43.5" lengthAdjust="spacingAndGlyphs">ok</text>
</svg>
<div class="abs" style="left:49px;top:501px;width:969px;height:52.5px;background:#b8bdc9;border-radius:4px 4px 0 0"></div>
<div class="abs" style="left:49px;top:555px;width:969px;height:108px;background:#d2d8e6;border:1px solid #30343b;border-radius:0 0 4px 4px"></div>
<div class="abs" style="left:49px;top:609px;width:969px;height:1px;background:#30343b"></div>
<div class="abs" style="left:60px;top:503.7px;font-size:15.4px;font-weight:bold;color:#444950;line-height:24px;letter-spacing:.35px;-webkit-text-stroke:.2px #444950">Ladepunkt</div>
<div class="abs" style="left:299px;top:503.7px;font-size:15.4px;font-weight:bold;color:#444950;line-height:24px;letter-spacing:.35px;-webkit-text-stroke:.2px #444950">Lademodus<br>Fahrzeug</div>
<div class="abs" style="left:539px;top:503.7px;font-size:15.4px;font-weight:bold;color:#444950;line-height:24px;letter-spacing:.35px;-webkit-text-stroke:.2px #444950">Parameter<br>SoC</div>
<div class="abs" style="left:778px;top:503.7px;font-size:15.4px;font-weight:bold;color:#444950;line-height:24px;letter-spacing:.35px;-webkit-text-stroke:.2px #444950">geladen</div>
<div class="abs" style="left:60px;top:560px;font-size:15.4px;font-weight:bold;color:#444950;line-height:24px;letter-spacing:.35px;-webkit-text-stroke:.2px #444950;word-spacing:1.5px">smartWB WLAN 20A</div>
<div class="abs" style="left:299px;top:560.8px;font-size:16px;color:#474c54;line-height:24px">Sofortladen<br>i3_60Ah_Nr.1</div>
<div class="abs" style="left:539px;top:560.8px;font-size:16px;color:#474c54;line-height:24px">0 W &#9312; 0 A</div>
<div class="abs" style="left:778px;top:560.8px;font-size:16px;color:#474c54;line-height:24px">0,0 kWh / 0,0 km</div>
<div class="ico" style="left:993px;top:562px"><svg viewBox="0 0 14 16" width="14" height="16"><rect x="0" y="1" width="14" height="14" rx="1.6" fill="#3c3f45"/><path d="M7 4.3V11.7M3.3 8H10.7" stroke="#fff" stroke-width="1.4"/></svg></div>
<div class="abs" style="left:60px;top:614px;font-size:15.4px;font-weight:bold;color:#444950;line-height:24px;letter-spacing:.35px;-webkit-text-stroke:.2px #444950;word-spacing:1.5px">smartWB LAN 32A</div>
<div class="abs" style="left:299px;top:614.8px;font-size:16px;color:#474c54;line-height:24px">Sofortladen<br>i3_60Ah_Nr.2</div>
<div class="abs" style="left:539px;top:614.8px;font-size:16px;color:#474c54;line-height:24px">0 W &#9312; 0 A</div>
<div class="abs" style="left:778px;top:614.8px;font-size:16px;color:#474c54;line-height:24px">0,0 kWh / 0,0 km</div>
<div class="ico" style="left:993px;top:616px"><svg viewBox="0 0 14 16" width="14" height="16"><rect x="0" y="1" width="14" height="14" rx="1.6" fill="#3c3f45"/><path d="M7 4.3V11.7M3.3 8H10.7" stroke="#fff" stroke-width="1.4"/></svg></div>
</body></html>
